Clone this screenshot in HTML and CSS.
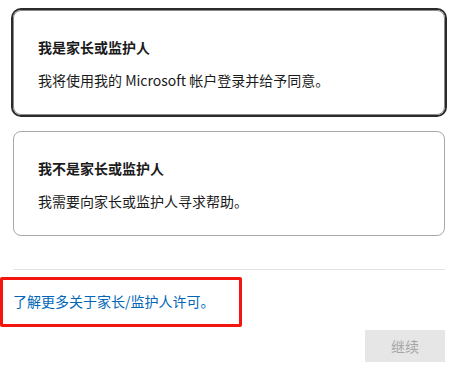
FILE: index.html
```html
<!DOCTYPE html>
<html lang="zh-CN">
<head>
    <meta charset="UTF-8">
    <meta name="viewport" content="width=device-width, initial-scale=1.0">
    <title>家长或监护人</title>
    <link rel="stylesheet" href="styles.css">
</head>
<body>
    <div class="consent">
        <div class="option selected">
            <h3>我是家长或监护人</h3>
            <p>我将使用我的 Microsoft 帐户登录并给予同意。</p>
        </div>
        <div class="option">
            <h3>我不是家长或监护人</h3>
            <p>我需要向家长或监护人寻求帮助。</p>
        </div>
        <hr class="divider">
        <div class="learn">
            <a href="#" class="learn-link">了解更多关于家长/监护人许可。</a>
            <div class="highlight"></div>
        </div>
        <div class="actions">
            <button class="next-btn" disabled>继续</button>
        </div>
    </div>
</body>
</html>
```

FILE: styles.css
```css
* {
    margin: 0;
    padding: 0;
    box-sizing: border-box;
}
body {
    background: #fff;
    font-family: "Noto Sans CJK SC", "Noto Sans", sans-serif;
    color: #1b1b1b;
}
.consent {
    padding: 10px 13px 0 13px;
}
.option {
    height: 105px;
    border: 1px solid #a8a8a8;
    border-radius: 8px;
    padding: 26px 24px 0 24px;
    margin-bottom: 16px;
}
.option.selected {
    border-color: #8a8a8a;
    box-shadow: 0 0 0 2px #2b2b2b;
}
.option h3 {
    font-size: 14px;
    font-weight: 700;
    line-height: 20px;
}
.option p {
    font-size: 14px;
    line-height: 20px;
    margin-top: 13px;
}
.divider {
    border: none;
    border-top: 1px solid #e3e3e3;
    margin-top: 33px;
}
.learn {
    position: relative;
    height: 60px;
    padding-top: 18px;
}
.learn-link {
    font-size: 14px;
    line-height: 20px;
    color: #0067b8;
    text-decoration: none;
}
.highlight {
    position: absolute;
    left: -13px;
    top: 7px;
    width: 242px;
    height: 50px;
    border: 3px solid #f4150f;
    border-radius: 2px;
}
.actions {
    display: flex;
    justify-content: flex-end;
}
.next-btn {
    width: 80px;
    height: 32px;
    border: none;
    background: #e6e6e6;
    color: #a6a6a6;
    font-family: inherit;
    font-size: 14px;
}
```
